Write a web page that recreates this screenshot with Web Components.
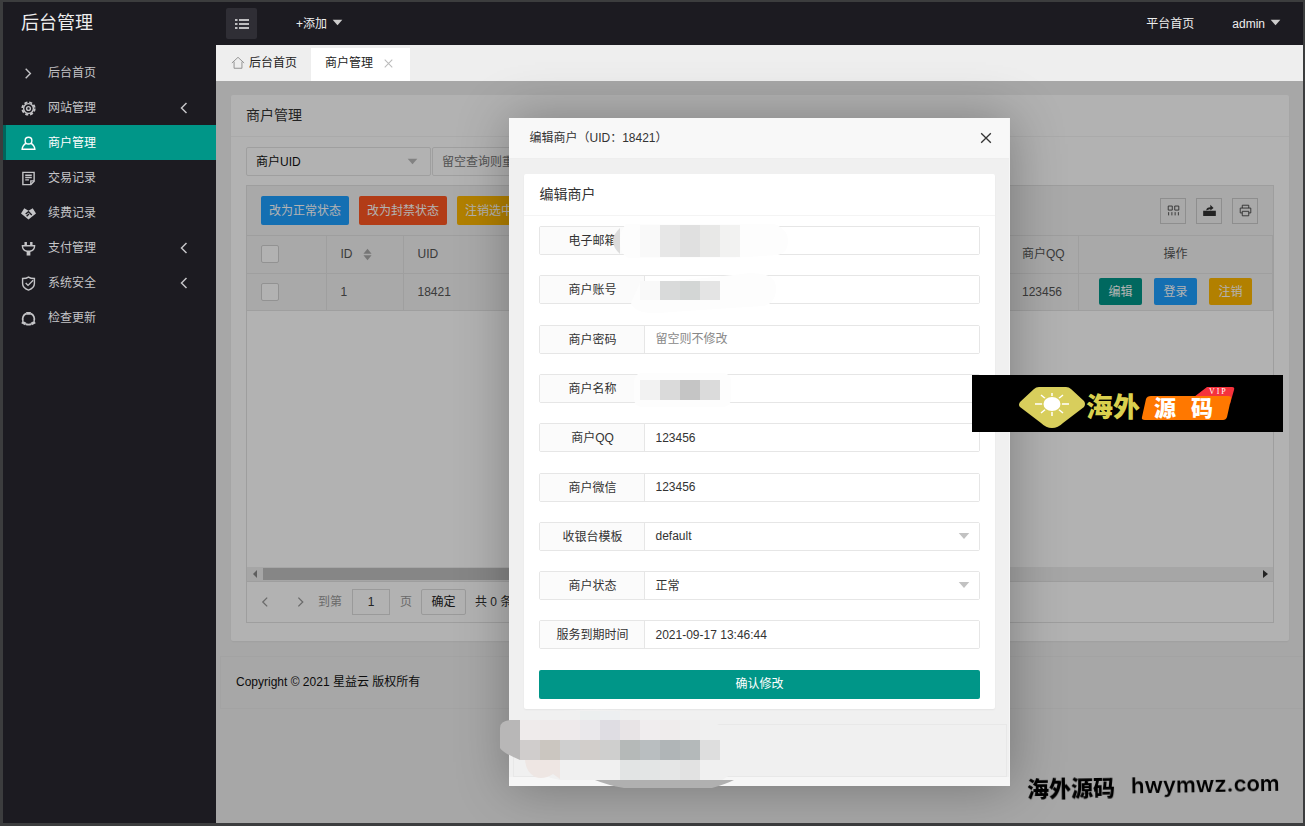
<!DOCTYPE html>
<html lang="zh-CN">
<head>
<meta charset="utf-8">
<title>后台管理</title>
<style>
html{height:100%}
body{margin:0;min-height:100%;box-sizing:border-box;display:flex;background:#3c3d3e;padding:2px 2px 3px 3px;color:#333;font:12px/18px "Liberation Sans","Noto Sans CJK SC",sans-serif;overflow:hidden}
</style>
</head>
<body>
<admin-app></admin-app>
<script>
const ICONS={
 right:'<path d="M5 3l5 5-5 5"/>',
 left:'<path d="M10.500 3l-5 5 5 5"/>',
 gear:'<circle cx="8" cy="8" r="6.600" stroke-dasharray="3.200 1.980" stroke-width="2"/><circle cx="8" cy="8" r="5.200"/><circle cx="8" cy="8" r="2"/>',
 user:'<circle cx="8" cy="5" r="3.600"/><path d="M5.500 7.500C3 9 1.400 11.500 1.200 14.200h13.600c-.2-2.700-1.800-5.200-4.300-6.700"/>',
 note:'<path d="M2 1.500h12v9.500l-3.500 3.500H2z"/><path d="M4.500 4.500h7M4.500 7h7M4.500 9.500h4M14 10.500h-3.500V14"/>',
 hands:'<path d="M0 8l3.500-5.500L8 5l4.500-2.500L16 8l-8 6.500z" fill="currentColor" stroke="none"/><path d="M5 8.500l3-2.500 3.500 3.500M6 11l2.500-2.500" stroke="#1c1b21"/>',
 plug:'<path d="M5 1v4M11 1v4" stroke-width="2.600"/><path d="M1.500 5h13c0 3.200-2 5.500-5 6h-3c-3-.5-5-2.800-5-6z"/><path d="M8 11v4.500" stroke-width="4"/>',
 shield:'<path d="M8 1.200c2 1.300 4.300 1.500 6.300 1.500V8c0 3.500-2.800 5.700-6.300 7C4.500 13.700 1.700 11.500 1.700 8V2.700C3.700 2.700 6 2.500 8 1.200z"/><path d="M5 7.500L7.500 10 13 4.500"/>',
 update:'<path d="M5.500 2.800A6 6 0 0 0 2.200 10.500M10.500 2.800a6 6 0 0 1 3.300 7.700M5 14q3 1 6 0" stroke-width="1.800"/><path d="M5.500 2.500h5M1 11.800l4 2M15 11.800l-4 2" stroke-width="3"/>',
 home:'<path d="M1 8l7-6.500L15 8M3.500 6.500V14h9V6.500" stroke-width="1"/>',
 close:'<path d="M2.500 2.500l11 11M13.500 2.500l-11 11"/>',
 menu:'<path d="M5 4h10M5 8h10M5 12h10M1 4h2.500M1 8h2.500M1 12h2.500" stroke-width="1.600"/>',
 down:'<path d="M1 4h14l-7 8z" fill="currentColor" stroke="none"/>',
 sort:'<path d="M8 1l5 6H3zM8 15l5-6H3z" fill="currentColor" stroke="none"/>',
 cols:'<path d="M1.500 2.500h5v5h-5zM9.500 2.500h5v5h-5zM2 10v4M6 10v4M10 10v4M14 10v4" stroke-width="1"/>',
 exp:'<path d="M1 9h14v5H1z" fill="currentColor"/><path d="M4 8c0-3 2-4 5-4V1l4 4-4 3V6" fill="currentColor" stroke="none"/>',
 print:'<path d="M4 5V1.500h8V5M4 11H1.500V5h13v6H12M4 9h8v5.500H4z" stroke-width="1"/>',
 tl:'<path d="M10 4v8L6 8z" fill="currentColor" stroke="none"/>',
 tr:'<path d="M6 4v8l5-4z" fill="currentColor" stroke="none"/>'
};
function define(name,render){
 customElements.define(name,class extends HTMLElement{
  connectedCallback(){
   if(this.shadowRoot)return;
   this.attachShadow({mode:'open'}).innerHTML='<style>*{box-sizing:border-box}:host{display:block;box-sizing:border-box}button,input,select{font:inherit;color:inherit;margin:0}a{color:inherit;text-decoration:none}</style>'+render(this);
  }
 });
}
const at=(el,n)=>el.getAttribute(n)||'';

define('ui-icon',el=>`<style>:host{display:inline-flex;width:16px;height:16px;flex:none}svg{width:100%;height:100%;fill:none;stroke:currentColor;stroke-width:1.500}</style><svg viewBox="0 0 16 16" aria-hidden="true">${ICONS[at(el,'name')]}</svg>`);

define('nav-item',el=>`<style>
:host{color:#c4c4c7}
a{display:flex;align-items:center;height:35px;padding:1px 24px 0 15px;border-left:3px solid transparent}
:host([active]) a{background:#009688;color:#fff;border-color:#00655c}
.i{width:15px;height:15px;margin-right:12px}
.t{flex:1}
</style><a href="#"><ui-icon class="i" name="${at(el,'icon')}"></ui-icon><span class="t"><slot></slot></span>${el.hasAttribute('more')?'<ui-icon name="left"></ui-icon>':''}</a>`);

define('side-nav',()=>`<style>
:host{width:213px;flex:none;background:#1c1b21}
h1{margin:0;height:53px;padding:0 18px;font-size:18px;line-height:42px;font-weight:400;color:#eee}
</style><h1>后台管理</h1><nav>
<nav-item icon="right">后台首页</nav-item>
<nav-item icon="gear" more>网站管理</nav-item>
<nav-item icon="user" active>商户管理</nav-item>
<nav-item icon="note">交易记录</nav-item>
<nav-item icon="hands">续费记录</nav-item>
<nav-item icon="plug" more>支付管理</nav-item>
<nav-item icon="shield" more>系统安全</nav-item>
<nav-item icon="update">检查更新</nav-item></nav>`);

define('top-bar',()=>`<style>
:host{height:43px;background:#1c1b21;color:#eee;display:flex;align-items:center;padding:0 22px 0 10px}
button{width:31px;height:31px;border:0;border-radius:2px;background:#2f2e35;display:grid;place-items:center;padding:0;margin-right:39px}
a{display:flex;align-items:center;gap:5px}
.sp{flex:1}
.adm{margin-left:38px}
.d{width:11px;height:15px;margin-bottom:2px;color:#ccc}
</style><button aria-label="菜单"><ui-icon name="menu"></ui-icon></button><a href="#">+添加<ui-icon class="d" name="down"></ui-icon></a><span class="sp"></span><a href="#">平台首页</a><a class="adm" href="#">admin<ui-icon class="d" name="down"></ui-icon></a>`);

define('tab-bar',()=>`<style>
:host{height:36px;background:#eee;color:#222;display:flex}
a{display:flex;align-items:center;padding:0 14px 0 15px;white-space:nowrap}
.h{gap:4px}
.h ui-icon{width:14px;height:14px;color:#888}
.on{background:#fff;margin-top:3px;padding:0 16px 3px 14px;gap:10px}
.on ui-icon{width:11px;height:11px;color:#bbb}
</style><a class="h" href="#"><ui-icon name="home"></ui-icon>后台首页</a><a class="on" href="#">商户管理<ui-icon name="close"></ui-icon></a>`);

define('ui-button',el=>`<style>
:host{display:inline-block}
button{width:100%;height:29px;padding:0 8px;border:0;border-radius:2px;color:#fff;background:#1e9fff;white-space:nowrap}
:host([tone=red]) button{background:#ff5722}
:host([tone=amber]) button{background:#ffb800}
:host([tone=green]) button{background:#009688}
:host([small]) button{height:27px}
</style><button><slot></slot></button>`);

define('data-table',()=>`<style>
:host{border:1px solid #e2e2e2}
.tools{height:50px;background:#f2f2f2;display:flex;align-items:center;gap:10px;padding:0 15px 0 14px;border-bottom:1px solid #e2e2e2}
.sp{flex:1}
.tb{width:26px;height:26px;padding:0;border:1px solid #ccc;background:none;display:grid;place-items:center;color:#333;flex:none}
.tb ui-icon{width:13px;height:13px}
table{width:100%;border-collapse:collapse;table-layout:fixed;background:#f2f2f2;color:#555}
th,td{height:37px;padding:0 14px;text-align:left;font-weight:400;white-space:nowrap;border:solid #e4e4e4;border-width:0 1px 1px 0}
th:last-child,td:last-child{text-align:center;padding:0}
.b{width:79px}.id{width:77px}.q{width:71px}.o{width:194px}
input[type=checkbox]{appearance:none;display:block;width:18px;height:18px;border:1px solid #d2d2d2;background:#fff;border-radius:2px}
.s{display:flex;align-items:center;gap:8px}.s ui-icon{width:13px;height:13px;color:#aaa}
.ops{display:flex;gap:12px;justify-content:center}
.ops ui-button{width:43px}
.fill{height:256px;background:#fff}
.bar{height:15px;background:#eee;display:flex;align-items:center;justify-content:space-between;border-bottom:1px solid #e2e2e2}
.thumb{width:60%;height:12px;background:#c1c1c1;margin-right:auto}
.l{color:#888}
.pg{height:40px;display:flex;align-items:center;padding:0 11px;color:#999}
.pg ui-icon{width:14px;height:14px;margin-right:22px}
.pg .n{margin-right:10px}
label{display:flex;align-items:center;gap:10px}
.pg input{width:38px;height:26px;border:1px solid #ddd;text-align:center;background:#fff;color:#333;padding:0}
.pg button{width:45px;height:26px;margin:0 9px 0 9px;border:1px solid #ddd;border-radius:2px;background:#fff;color:#222;padding:0}
.c{color:#333}
</style>
<div class="tools"><ui-button>改为正常状态</ui-button><ui-button tone="red">改为封禁状态</ui-button><ui-button tone="amber">注销选中</ui-button><span class="sp"></span>
<button class="tb" aria-label="筛选列"><ui-icon name="cols"></ui-icon></button><button class="tb" aria-label="导出"><ui-icon name="exp"></ui-icon></button><button class="tb" aria-label="打印"><ui-icon name="print"></ui-icon></button></div>
<table><colgroup><col class="b"><col class="id"><col><col class="q"><col class="o"></colgroup>
<thead><tr><th><input type="checkbox" aria-label="全选"></th><th><span class="s">ID<ui-icon name="sort"></ui-icon></span></th><th>UID</th><th>商户QQ</th><th>操作</th></tr></thead>
<tbody><tr><td><input type="checkbox" aria-label="选择"></td><td>1</td><td>18421</td><td>123456</td><td><div class="ops"><ui-button small tone="green">编辑</ui-button><ui-button small>登录</ui-button><ui-button small tone="amber">注销</ui-button></div></td></tr></tbody></table>
<div class="fill"></div>
<div class="bar"><ui-icon class="l" name="tl"></ui-icon><div class="thumb"></div><ui-icon name="tr"></ui-icon></div>
<div class="pg"><ui-icon name="left"></ui-icon><ui-icon class="n" name="right"></ui-icon><label>到第<input value="1">页</label><button>确定</button><span class="c">共 0 条</span></div>`);

define('ui-card',el=>`<style>
:host{background:#fff;display:flex;flex-direction:column;border-radius:2px;box-shadow:0 1px 2px #0000000d}
h2{margin:0;padding:0 15px;font-size:14px;line-height:41px;font-weight:400;color:#333;border-bottom:1px solid #f4f4f4}
.b{flex:1;padding:10px 15px;display:flex;flex-direction:column}
</style><h2>${at(el,'heading')}</h2><div class="b"><slot></slot></div>`);

define('search-row',()=>`<style>
:host{display:flex;height:29px;margin-bottom:9px}
.s{position:relative;width:185px;margin-right:1px}
select,input{width:100%;height:29px;border:1px solid #e4e4e4;background:#fff;padding:0 9px;border-radius:2px;appearance:none}
select{color:#111}
.s ui-icon{position:absolute;right:13px;top:8px;width:11px;height:13px;color:#bbb;pointer-events:none}
input{width:190px}
input::placeholder{color:#777}
</style><div class="s"><select aria-label="查询类型"><option>商户UID</option></select><ui-icon name="down"></ui-icon></div><input aria-label="查询内容" placeholder="留空查询则重置">`);

define('form-field',el=>{
 const v=at(el,'value');
 return `<style>
:host{display:flex;height:29px;border:1px solid #e6e6e6;border-radius:2px;position:relative}
label{width:105px;text-align:center;line-height:28px;background:#fbfbfb;border-right:1px solid #e6e6e6;color:#333}
input,select{flex:1;min-width:0;width:0;border:0;background:#fff;padding:0 10px;color:#333;appearance:none;line-height:18px}
input::placeholder{color:#888}
ui-icon{position:absolute;right:9px;top:7px;width:12px;height:12px;color:#c2c2c2;pointer-events:none}
</style><label for="f">${at(el,'label')}</label>${el.hasAttribute('choice')?`<select id="f"><option>${v}</option></select><ui-icon name="down"></ui-icon>`:`<input id="f" type="text" value="${v}" placeholder="${at(el,'placeholder')}">`}`;});

const tiles=(y,h,x,list)=>list.map((c,i)=>c?`<rect x="${x+i*20}" y="${y}" width="20" height="${h}" fill="${c}"/>`:'').join('');
define('redaction-layer',()=>`<style>
:host{position:absolute;left:-9px;top:0;width:300px;height:672px;pointer-events:none}
svg{display:block;width:100%;height:100%}
</style><svg viewBox="500 118 300 672" aria-hidden="true">
<path d="M620 228q-14 13 0 26z" fill="#dcdcdc"/>
<path d="M626 224h148q14 5 14 17t-10 14l-48 3H628q-8-4-8-16t6-18z" fill="#fdfdfd"/>
${tiles(225,32,640,['#f9f9f9','#e7e7e7','#e0e0e0','#e8e8e7','#f2f2f1'])}
<path d="M640 283q40-2 110-10 26 0 26 15t-12 18q-50 3-105 7-25 1-28-10z" fill="#fdfdfd"/>
${tiles(281,19,640,['#f9f9f9','#d9dada','#d3d6d5','#e4e4e4'])}
<rect x="634" y="373" width="97" height="34" rx="8" fill="#fdfdfd"/>
${tiles(380,20,640,['#f2f2f2','#dadada','#c5c5c5','#dbdbdb'])}
<path d="M520 715q90-12 180 4 42 10 42 30t-20 31H560q-40-8-40-30z" fill="#f0f0f0"/>
<path d="M520 720H510q-10 1-10 8v20q3 5 20 12z" fill="#b8b7b7"/>
${tiles(711,9,560,['#f0f0f0','#ecefef','#edeff1','#f0f0f0'])}
${tiles(720,20,520,['#efebeb','#eeeaea','#eeeaeb','#eae8eb','#dfdde3','#e8e4e6','#f0edee','#efecec','#efeeee'])}
${tiles(740,20,520,['#d0cdcc','#cbc6c0','#cfcfcf','#d2cecb','#cfcfce','#b5b9b8','#b9bec0','#b0b5b7','#b4b9ba','#dedede'])}
<path d="M525 760h35v19l-7-5q-9 6-18 3-9-5-10-17z" fill="#eee6e3"/>
${tiles(760,20,620,['#e2e4e4','#e3e5e5','#e5e6e6','#e2e2e2'])}
<path d="M595 780h139q-8 4-22 8h-88q-17-3-29-8z" fill="#b0b0b0"/>
</svg>`);

define('edit-dialog',()=>`<style>
:host{position:relative;width:46%;height:90%;background:#f0f0f0;box-shadow:1px 1px 50px #0000004d;display:flex;flex-direction:column;border:solid #f6f6f6;border-width:0 1px 9px 0}
header{height:41px;flex:none;display:flex;align-items:center;justify-content:space-between;background:#f8f8f8;border-bottom:1px solid #eee;padding:0 16px 0 20px;color:#333}
header button{border:0;background:none;padding:0;height:14px;display:flex;color:#333}
header ui-icon{width:14px;height:14px}
ui-card{flex:1;margin:15px 14px 15px 15px}
form{flex:1;display:flex;flex-direction:column;justify-content:space-between}
footer{height:53px;flex:none;border:1px solid #e8e8e8;margin:0 2px 0 4px}
</style><header role="heading" aria-level="2"><span>编辑商户（UID：18421）</span><button aria-label="关闭"><ui-icon name="close"></ui-icon></button></header>
<ui-card heading="编辑商户"><form>
<form-field label="电子邮箱"></form-field>
<form-field label="商户账号"></form-field>
<form-field label="商户密码" placeholder="留空则不修改"></form-field>
<form-field label="商户名称"></form-field>
<form-field label="商户QQ" value="123456"></form-field>
<form-field label="商户微信" value="123456"></form-field>
<form-field label="收银台模板" value="default" choice></form-field>
<form-field label="商户状态" value="正常" choice></form-field>
<form-field label="服务到期时间" value="2021-09-17 13:46:44"></form-field>
<ui-button tone="green">确认修改</ui-button></form></ui-card><footer></footer><redaction-layer></redaction-layer>`);

define('brand-banner',()=>`<style>
:host{position:fixed;right:22px;top:375px;width:311px;height:57px;background:#000}
svg{display:block;font-family:"Noto Sans CJK SC",sans-serif;font-weight:900}
</style><svg width="311" height="57" viewBox="972 375 311 57">
<path d="M1020 402l14-13q2-2 5-2h27q3 0 5 2l13 12q2 3 0 6l-21 16q-5 5-11 5t-11-5l-21-16q-2-2 0-5z" fill="#d8ce5c"/>
<g stroke="#fff" stroke-width="1.500"><path d="M1052 393v23M1035 404h34M1041 395l22 18M1063 395l-22 18"/></g><ellipse cx="1052" cy="404" rx="10" ry="8" fill="#d8ce5c"/><ellipse cx="1052" cy="404" rx="8.500" ry="7" fill="#fff"/>
<text x="1086" y="417" font-size="27" fill="#d9d04e">海外</text>
<path d="M1194 397l13-10h25q3 0 2 3l-4 14z" fill="#f5323c"/>
<path d="M1151 396h77q4 0 3 3l-4 18q-1 3-4 3h-78q-4 0-3-3l4-18q1-3 5-3z" fill="#ff7800"/>
<text x="1154" y="416" font-size="22" fill="#fff" xml:space="preserve">源   码</text>
<text x="1209" y="394" font-size="8" style="font-family:'Liberation Serif',serif;font-weight:400" fill="#fff">V I P</text>
</svg>`);

define('site-mark',()=>`<style>
:host{position:fixed;right:25px;bottom:26px;display:flex;align-items:center;gap:16px;color:#000;transform:rotate(-1deg);line-height:30px;white-space:nowrap}
b{font:900 22px/30px "Noto Sans CJK SC",sans-serif}
span{font:600 22px/30px Inter,sans-serif}
</style><b>海外源码</b><span>hwymwz.com</span>`);

define('admin-app',()=>`<style>
:host{flex:1;display:flex;min-width:0}
main{flex:1;min-width:0;display:flex;flex-direction:column}
.page{flex:1;position:relative;background:#f0f0f0;padding-top:14px}
.page>ui-card{margin:0 14px 15px 15px;padding-bottom:8px}
.foot{height:53px;margin-left:4px;padding:0 15px;line-height:51px;color:#111;border:1px solid #eaeaea;border-right:0}
.mask{position:absolute;inset:0;background:#0000004d;display:flex;align-items:center;justify-content:center}
</style><side-nav></side-nav><main><top-bar></top-bar><tab-bar></tab-bar>
<div class="page"><ui-card heading="商户管理"><search-row></search-row><data-table></data-table></ui-card>
<div class="foot">Copyright © 2021 星益云 版权所有</div>
<div class="mask"><edit-dialog></edit-dialog></div></div></main>
<brand-banner></brand-banner><site-mark></site-mark>`);
</script>
</body>
</html>
